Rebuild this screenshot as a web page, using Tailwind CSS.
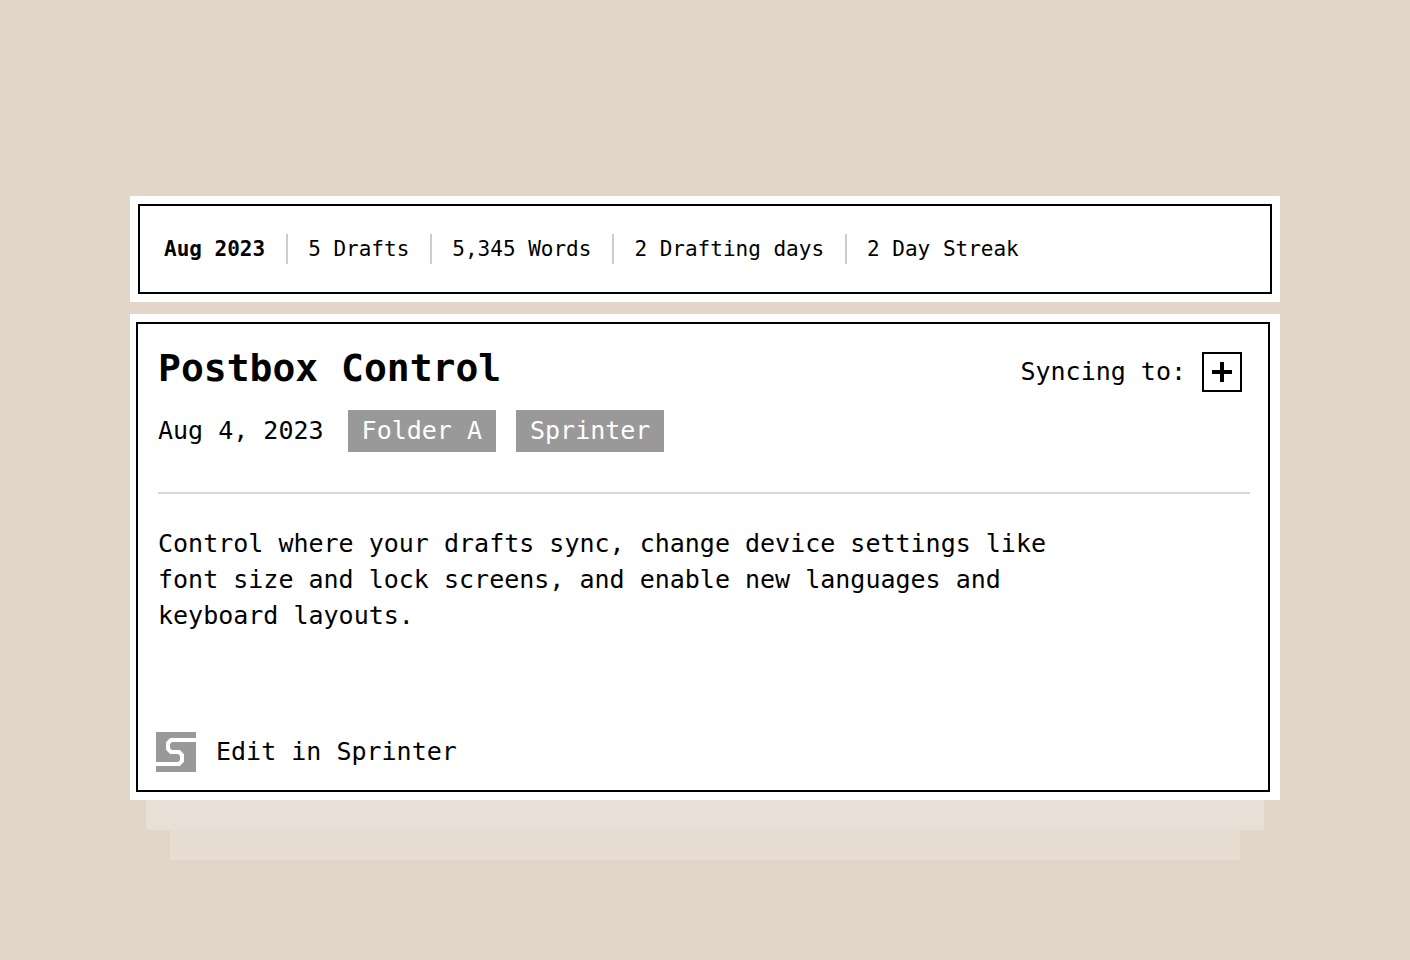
<!DOCTYPE html>
<html lang="en">
<head>
    <meta charset="UTF-8">
    <meta name="viewport" content="width=device-width, initial-scale=1.0">
    <title>Postbox Control</title>
    <script src="https://cdn.jsdelivr.net/npm/@tailwindcss/browser@4"></script>
</head>
<body class="bg-[#e2d6c8] min-h-screen text-black font-['DejaVu_Sans_Mono',monospace]">

    <main class="px-[130px] pt-[196px] pb-[100px]">

        <!-- Monthly stats -->
        <section class="bg-white p-2">
            <ul class="flex border-2 border-black px-6 py-7 text-[21px] leading-[30px] divide-x-2 divide-[#cccccc]">
                <li class="pr-[21px] font-bold">Aug 2023</li>
                <li class="pl-5 pr-[21px]">5 Drafts</li>
                <li class="pl-5 pr-[21px]">5,345 Words</li>
                <li class="pl-5 pr-[21px]">2 Drafting days</li>
                <li class="pl-5">2 Day Streak</li>
            </ul>
        </section>

        <!-- Draft card -->
        <article class="mt-3 bg-white py-2 pl-1.5 pr-2.5">
            <div class="border-2 border-black pt-6 pb-[18px] pl-5 pr-[18px] text-[25px] leading-9">
                <header class="flex items-start justify-between">
                    <h1 class="text-[38px] leading-10 font-bold">Postbox Control</h1>
                    <div class="mt-1 mr-2 flex items-center gap-4">
                        <span>Syncing to:</span>
                        <button type="button" aria-label="Add destination" class="flex size-10 items-center justify-center border-2 border-black">
                            <svg class="size-5" viewBox="0 0 20 20" fill="none" stroke="currentColor" stroke-width="4">
                                <path d="M10 0v20M0 10h20"/>
                            </svg>
                        </button>
                    </div>
                </header>

                <div class="mt-[18px] flex items-center">
                    <time datetime="2023-08-04" class="mr-6">Aug 4, 2023</time>
                    <div class="flex gap-5 text-white">
                        <a href="#" class="bg-[#999999] px-3.5 py-[3px]">Folder A</a>
                        <a href="#" class="bg-[#999999] px-3.5 py-[3px]">Sprinter</a>
                    </div>
                </div>

                <hr class="mt-10 border-t-2 border-[#d9d9d9]">

                <p class="mt-8 max-w-[940px]">Control where your drafts sync, change device settings like font size and lock screens, and enable new languages and keyboard layouts.</p>

                <a href="#" class="mt-[98px] -ml-0.5 flex items-center gap-5">
                    <svg class="size-10" viewBox="0 0 40 40" fill="none">
                        <path d="M0 0h40v40H0z" fill="#999999"/>
                        <path d="M40 8H15l-3 3v6l3 3h8l3 3v6l-3 3H0" stroke="#ffffff" stroke-width="4"/>
                    </svg>
                    Edit in Sprinter
                </a>
            </div>
        </article>

        <!-- Cards stacked underneath -->
        <div class="mx-4 h-[30px] bg-[#e8dfd6]"></div>
        <div class="mx-10 h-[30px] bg-[#e7ddd3]"></div>
    </main>

</body>
</html>
